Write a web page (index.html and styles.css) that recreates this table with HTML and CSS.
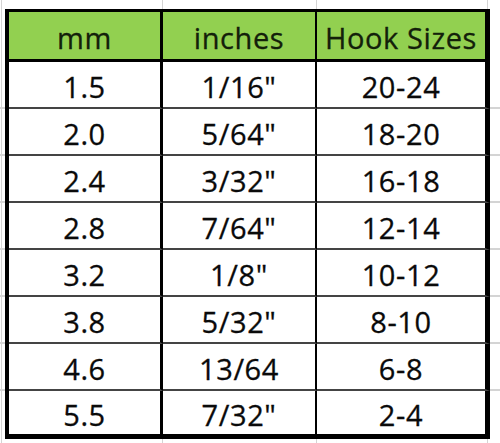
FILE: index.html
```html
<!DOCTYPE html>
<html>
<head>
<meta charset="utf-8">
<link rel="stylesheet" href="styles.css">
</head>
<body>
<div class="sheet">
  <table class="sizes">
    <thead>
      <tr><th class="c1">mm</th><th class="c2">inches</th><th class="c3">Hook Sizes</th></tr>
    </thead>
    <tbody>
      <tr><td class="c1">1.5</td><td class="c2">1/16"</td><td class="c3">20-24</td></tr>
      <tr><td class="c1">2.0</td><td class="c2">5/64"</td><td class="c3">18-20</td></tr>
      <tr><td class="c1">2.4</td><td class="c2">3/32"</td><td class="c3">16-18</td></tr>
      <tr><td class="c1">2.8</td><td class="c2">7/64"</td><td class="c3">12-14</td></tr>
      <tr><td class="c1">3.2</td><td class="c2">1/8"</td><td class="c3">10-12</td></tr>
      <tr><td class="c1">3.8</td><td class="c2">5/32"</td><td class="c3">8-10</td></tr>
      <tr><td class="c1">4.6</td><td class="c2">13/64</td><td class="c3">6-8</td></tr>
      <tr class="last"><td class="c1">5.5</td><td class="c2">7/32"</td><td class="c3">2-4</td></tr>
    </tbody>
  </table>
</div>
</body>
</html>
```
FILE: styles.css
```css
html, body {
  margin: 0;
  padding: 0;
  background: #fff;
}
.sheet {
  width: 500px;
  height: 443px;
  box-sizing: border-box;
  padding: 9px 10px 0 5px;
  background-color: #fff;
  background-image:
    linear-gradient(#d4d4d4, #d4d4d4),
    linear-gradient(#d4d4d4, #d4d4d4),
    linear-gradient(#d4d4d4, #d4d4d4),
    linear-gradient(#d4d4d4, #d4d4d4),
    linear-gradient(to bottom, transparent 107px, #d4d4d4 107px, #d4d4d4 109px, transparent 109px,
      transparent 154px, #d4d4d4 154px, #d4d4d4 156px, transparent 156px,
      transparent 201px, #d4d4d4 201px, #d4d4d4 203px, transparent 203px,
      transparent 248px, #d4d4d4 248px, #d4d4d4 250px, transparent 250px,
      transparent 295px, #d4d4d4 295px, #d4d4d4 297px, transparent 297px,
      transparent 342px, #d4d4d4 342px, #d4d4d4 344px, transparent 344px,
      transparent 389px, #d4d4d4 389px, #d4d4d4 391px, transparent 391px);
  background-repeat: no-repeat;
  background-size: 1px 443px, 1px 443px, 1px 443px, 1px 443px, 500px 443px;
  background-position: 1px 0, 162px 0, 316px 0, 487px 0, 0 0;
  font-family: "Open Sans", "Liberation Sans", sans-serif;
}
.sizes {
  border-spacing: 0;
  border-collapse: separate;
  table-layout: fixed;
  width: 485px;
  border-left: 4px solid #000;
  border-top: 3px solid #000;
  background: #fff;
}
.sizes th,
.sizes td {
  padding: 3px 0 0 0;
  text-align: center;
  vertical-align: middle;
  font-size: 29px;
  letter-spacing: 0.6px;
  font-weight: 400;
  color: #0a0a0a;
  line-height: 1;
  box-sizing: border-box;
  -webkit-text-stroke: 0.3px currentColor;
}
.sizes th {
  background: #92d050;
  color: #13200a;
  height: 50px;
  border-bottom: 3px solid #000;
}
.sizes td {
  height: 47px;
  border-bottom: 2px solid #444;
}
.sizes tr.last td {
  height: 48px;
  border-bottom: 5px solid #000;
}
.sizes .c1 {
  width: 154px;
  border-right: 3px solid #000;
}
.sizes .c2 {
  width: 154px;
  border-right: 2px solid #000;
}
.sizes .c3 {
  width: 173px;
  border-right: 5px solid #000;
}
```
